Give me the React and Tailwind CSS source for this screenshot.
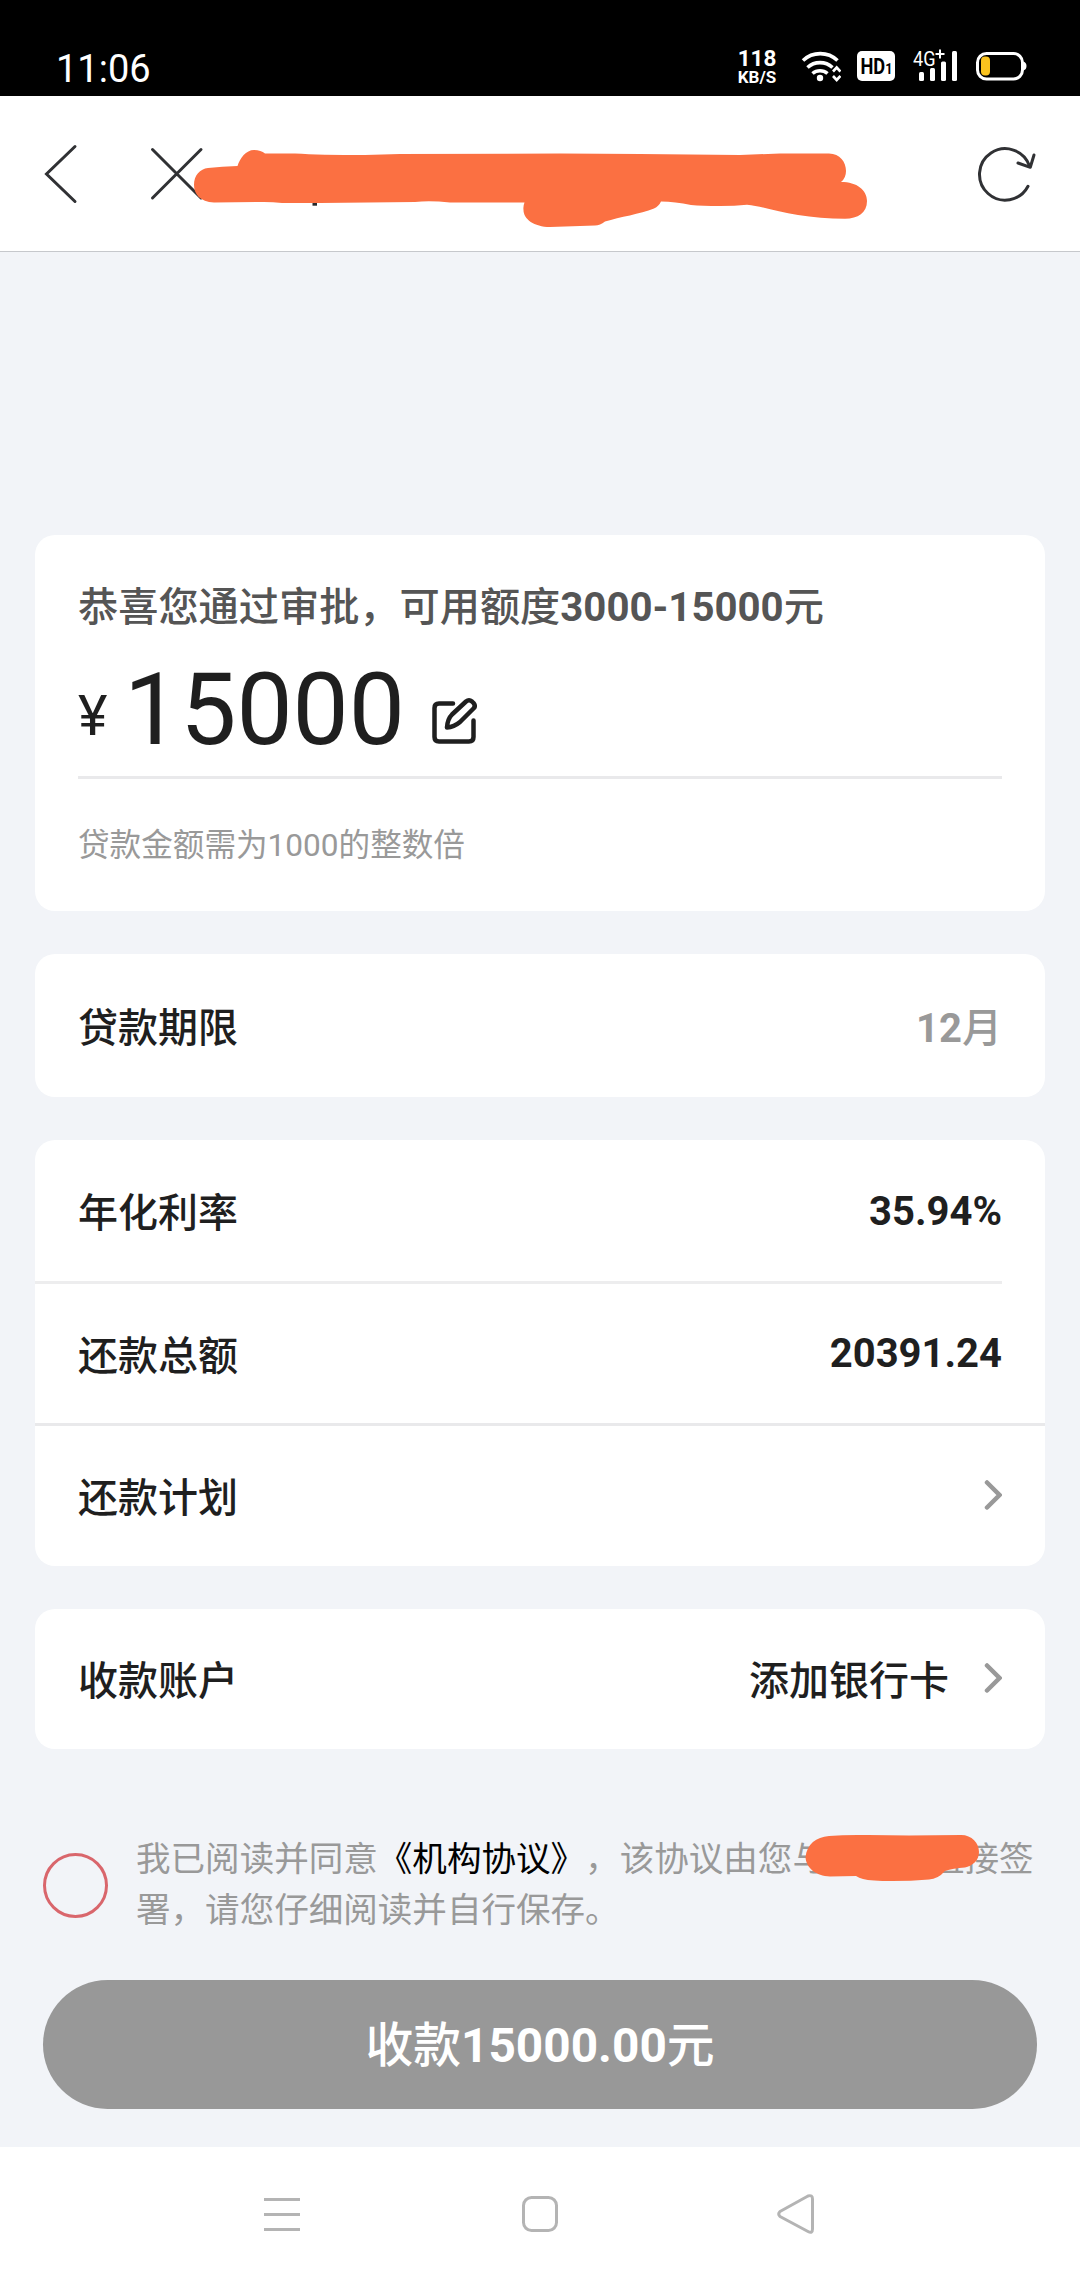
import { useState } from "react"

const rates = [
  { label: "年化利率", value: "35.94%" },
  { label: "还款总额", value: "20391.24" },
]

function StatusBar() {
  return (
    <div className="h-24 bg-black text-white flex justify-between pl-[56px] pr-[53px]">
      <span className="pt-[47px] text-[38px] leading-[44px]">11:06</span>
      <div className="flex pt-[46px]">
        <div className="w-[40px] text-center font-bold mr-[24px]">
          <div className="text-[22.5px] leading-[24px]">118</div>
          <div className="text-[17px] leading-[15px] whitespace-nowrap">KB/S</div>
        </div>
        <svg width="40" height="38" viewBox="801 46 40 38" className="mr-[16px]" fill="none" stroke="#fff" strokeWidth="3.6">
          <path d="M803 60.500a25 25 0 0 1 34.500 0" />
          <path d="M807.500 67.500a18.500 18.500 0 0 1 25 0" />
          <path d="M812.500 73.500a11.500 11.500 0 0 1 15 0" />
          <circle cx="820" cy="78" r="3.200" fill="#fff" stroke="none" />
          <path d="M833 71.500l3.700-4 3.700 4M833 76l3.700 4 3.700-4" strokeWidth="2.600" />
        </svg>
        <svg width="38" height="38" viewBox="857 46 38 38" className="mr-[18px]">
          <rect x="857" y="51" width="38" height="30" rx="5" fill="#fff" />
          <text x="860.500" y="74" fontSize="21.500" fontWeight="700" textLength="32" lengthAdjust="spacingAndGlyphs">
            HD<tspan fontSize="15">1</tspan>
          </text>
        </svg>
        <svg width="46" height="38" viewBox="913 46 46 38" className="mr-[17px]" fill="#fff">
          <text x="913" y="66.300" fontSize="20" textLength="22.500" lengthAdjust="spacingAndGlyphs">4G</text>
          <path d="M935.500 53h9v2h-9zM939 49.500h2v9h-2z" />
          <rect x="919" y="72" width="5" height="9" rx="1.500" />
          <rect x="930" y="68" width="5" height="13" rx="1.500" />
          <rect x="941" y="61.500" width="5" height="19.500" rx="1.500" />
          <rect x="952" y="51" width="5" height="30" rx="1.500" />
        </svg>
        <svg width="51" height="38" viewBox="976 46 51 38">
          <rect x="977.500" y="53.500" width="45" height="25.500" rx="9" fill="none" stroke="#fff" strokeWidth="3" />
          <path d="M1023.500 61.500q3 1 3 4.500t-3 4.500z" fill="#fff" />
          <rect x="981" y="56.500" width="9" height="19" rx="4" fill="#fac31e" />
        </svg>
      </div>
    </div>
  )
}

function Header() {
  return (
    <header className="relative h-[156px] bg-white border-b border-[#c6c8cc] flex items-center px-[43px]">
      <svg width="36" height="60" viewBox="43 144 36 60" fill="none" stroke="#303134" strokeWidth="3" strokeLinecap="round">
        <path d="M75 146.500L46.500 174 75 201.500" />
      </svg>
      <svg width="56" height="56" viewBox="149 146 56 56" className="ml-[70px]" fill="none" stroke="#303134" strokeWidth="3" strokeLinecap="round">
        <path d="M152.500 149.500l48.500 48.500M201 149.500l-48.500 48.500" />
      </svg>
      <svg width="60" height="60" viewBox="977 144 60 60" className="ml-auto" fill="none" stroke="#303134" strokeWidth="3" strokeLinecap="round" strokeLinejoin="round">
        <path d="M1028 186.300A25.700 25.700 0 1 1 1029.500 166" />
        <path d="M1018 163l12.300 4.300 3.700-12.300" />
      </svg>
      <svg width="680" height="84" viewBox="190 146 680 84" className="absolute left-[190px] top-[50px]">
        <rect x="312.500" y="200" width="4.500" height="5.700" fill="#26282c" />
        <path
          fill="#fb7042"
          d="M194 185C194 175 200 169 208 168Q222 166.500 237.500 166C240 158 246 150 254 150Q261 150 265 153.500L295 153.500Q320 155 365 155L400 154L560 153.500L640 154L740 155L780 153.500L829 153.500C840 153.500 846 162 846 171Q846 178 841 182C857 182 867 190 867 201C867 213 858 218.700 845 218.700Q820 218.500 798 215C778 212 762 206 747 204.700Q735 206 720 206Q702 206 691 205Q675 201.500 661 201.500Q659 206 654 208.500C640 214 620 217 605 221.500Q600 225.500 595 225.500L550 227C534 227 523.500 219 523.500 210Q523 206 524.500 202.500L450 202.500Q430 200.500 415 202L320 203L282 203Q270 201.500 258 202L214 202.500C200 202 194 194 194 185Z"
        />
      </svg>
    </header>
  )
}

function Chevron() {
  return (
    <svg width="18" height="30" viewBox="0 0 18 30" className="relative -top-px" fill="none" stroke="#999" strokeWidth="4.500" strokeLinecap="round">
      <path d="M3 2.500L15.500 15 3 27.500" />
    </svg>
  )
}

function EditIcon() {
  return (
    <svg width="46" height="48" viewBox="431 697 46 48" fill="none" stroke="#1f1f1f" strokeWidth="4.500" strokeLinecap="round" strokeLinejoin="round">
      <path d="M453 703.500H439Q434.500 703.500 434.500 708V737Q434.500 741.500 439 741.500H469Q473.500 741.500 473.500 737V720.500" />
      <path d="M447 727.500Q447.500 719 452 714.500L466 701.500Q469 699 472 701.500L473.500 703Q476 706 473.500 708.500L460 722Q454 727 447 727.500Z" />
    </svg>
  )
}

export default function App() {
  const [agreed, setAgreed] = useState(false)

  return (
    <div className="w-[1080px] h-[2280px] flex flex-col overflow-hidden bg-[#f2f4f8] text-[#1f1f1f] font-[Roboto,'Noto_Sans_CJK_SC',sans-serif] [text-spacing-trim:space-all]">
      <StatusBar />
      <Header />

      <main className="flex-1 flex flex-col px-[35px] pt-[283px]">
        <section className="h-[376px] bg-white rounded-[20px] px-[43px] pt-[44px]">
          <h1 className="text-[40.2px] leading-[58px] font-medium text-[#555] whitespace-nowrap">
            恭喜您通过审批，可用额度<b className="font-bold">3000-15000</b>元
          </h1>
          <div className="h-[142px] border-b-3 border-[#e9e9eb] flex items-end pb-[32px]">
            <span className="w-[46px] text-[56px] leading-[56px]">¥</span>
            <span className="text-[100px] leading-[76px] -mb-[4px]">15000</span>
            <span className="ml-[26px] -mb-px">
              <EditIcon />
            </span>
          </div>
          <p className="mt-[44px] text-[31.6px] leading-[46px] text-[#999]">贷款金额需为1000的整数倍</p>
        </section>

        <section className="mt-[43px] h-[143px] bg-white rounded-[20px] px-[43px] pt-[7px] flex items-center justify-between text-[40px] font-medium">
          <span>贷款期限</span>
          <span className="text-[#999]"><b className="font-bold">12</b>月</span>
        </section>

        <section className="mt-[43px] h-[426px] bg-white rounded-[20px] text-[40px] font-medium">
          {rates.map((row, i) => (
            <div key={row.label} className={i === 0 ? "mr-[43px] border-b-3 border-[#ededee]" : "pr-[43px] border-b-3 border-[#e9e9eb]"}>
              <div className={i === 0 ? "h-[141px] pl-[43px] flex items-center justify-between" : "h-[139px] pl-[43px] flex items-center justify-between"}>
                <span className="pt-1.5">{row.label}</span>
                <span className={i === 0 ? "font-bold pt-0.5" : "font-bold"}>{row.value}</span>
              </div>
            </div>
          ))}
          <div className="h-[140px] px-[43px] flex items-center justify-between">
            <span className="pt-1.5">还款计划</span>
            <Chevron />
          </div>
        </section>

        <section className="mt-[43px] h-[140px] bg-white rounded-[20px] px-[43px] flex items-center text-[40px] font-medium">
          <span className="pt-1.5">收款账户</span>
          <span className="ml-auto mr-[35px] pt-1.5">添加银行卡</span>
          <Chevron />
        </section>

        <div className="mt-[85px] ml-2 flex items-center">
          <button
            type="button"
            onClick={() => setAgreed(!agreed)}
            className={`size-[65px] mr-[28px] shrink-0 rounded-full border-[3.5px] border-[#d9666c] ${agreed ? "bg-[#d9666c]" : ""}`}
          />
          <div className="text-[34.56px] leading-[51px] text-[#999] whitespace-nowrap">
            <p>
              我已阅读并同意<span className="text-black">《机构协议》</span>，该协议由您与
              <span className="relative inline-block w-[103px]">
                <svg width="178" height="50" viewBox="802 1833 178 50" className="absolute -left-[24px] -top-[38px]">
                  <path
                    fill="#fb7042"
                    d="M804.500 1857C806 1844 815 1837 828 1836Q845 1834.500 867 1835L908 1835.500L960 1835C971 1835 978 1843 978 1852C978 1861 971 1866 964 1867.500Q952 1868 944 1871Q937 1879 928 1879.500Q910 1881 891 1881Q870 1881 862 1879Q858 1878 855 1876L829 1876.500C815 1876 805 1868 804.500 1857Z"
                  />
                </svg>
              </span>
              直接签
            </p>
            <p>署，请您仔细阅读并自行保存。</p>
          </div>
        </div>

        <button type="button" className="mt-[44px] mx-2 h-[129px] pt-[4px] rounded-full bg-[#989898] text-white text-[47.8px] font-medium">
          收款<b className="font-bold">15000.00</b>元
        </button>
      </main>

      <nav className="h-[133px] bg-white flex justify-between pl-[264px] pr-[265px] pt-[46px]">
        <svg width="36" height="42" viewBox="0 0 36 42" stroke="#b4b4b4" strokeWidth="3">
          <path d="M0 6.500h36M0 21.500h36M0 36.500h36" />
        </svg>
        <svg width="36" height="42" viewBox="0 0 36 42" className="ml-0.5" fill="none" stroke="#b4b4b4" strokeWidth="3">
          <rect x="1.500" y="4.500" width="33" height="33" rx="8" />
        </svg>
        <svg width="38" height="42" viewBox="0 0 38 42" fill="none" stroke="#b4b4b4" strokeWidth="3" strokeLinejoin="round">
          <path d="M3 18.500L31 3Q35.500 1.500 35.500 6V36Q35.500 41 31 38.500L3 23.500Q0.500 21 3 18.500Z" />
        </svg>
      </nav>
    </div>
  )
}
